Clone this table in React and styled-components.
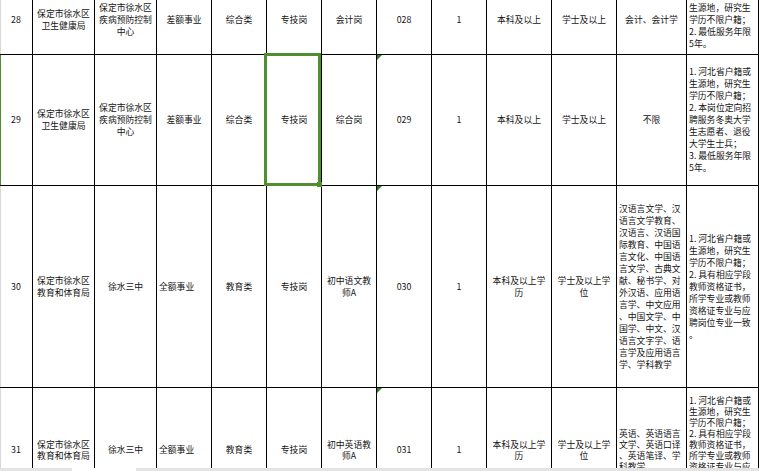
import styled, { createGlobalStyle } from "styled-components";

const GlobalStyle = createGlobalStyle`
  html, body {
    margin: 0;
    padding: 0;
    background: #fff;
    overflow: hidden;
  }
  body {
    font-family: "Noto Sans CJK SC", "Liberation Sans", sans-serif;
  }
`;

const COLS = [33, 62, 62, 55, 55, 55, 55, 55, 55, 65, 65, 70, 72];
const GREEN = "#4f8f2f";

const Window = styled.div`
  width: 759px;
  height: 471px;
  display: flex;
  flex-direction: column;
  overflow: hidden;
`;

const SheetArea = styled.div`
  height: 468px;
  overflow: hidden;
  box-shadow: inset 1px 0 #d8d8d8;
`;

const Sheet = styled.div`
  display: flex;
  flex-direction: column;
  margin-top: -14px;
`;

const Row = styled.div`
  display: grid;
  grid-template-columns: ${COLS.map((w) => `${w}px`).join(" ")};
  height: ${(p) => p.$height}px;
  flex-shrink: 0;
`;

const Cell = styled.div`
  position: relative;
  box-sizing: border-box;
  display: flex;
  align-items: center;
  justify-content: ${(p) => (p.$align === "l" ? "flex-start" : "center")};
  text-align: ${(p) => (p.$align === "l" ? "left" : "center")};
  padding: 0 2px;
  border-right: 1px solid #000;
  border-bottom: 1px solid #000;
  white-space: pre;
  font-size: 8.8px;
  line-height: ${(p) => p.$lh}px;
  color: #141414;
  box-shadow: ${(p) => (p.$edge ? `inset 1px 0 ${GREEN}` : "none")};
`;

const Selection = styled.div`
  position: absolute;
  top: -2px;
  left: -3px;
  right: 0;
  bottom: -1px;
  border: 3px solid ${GREEN};
  z-index: 2;
  pointer-events: none;
`;

const FillHandle = styled.div`
  position: absolute;
  right: -1px;
  bottom: -2px;
  width: 5px;
  height: 5px;
  background: ${GREEN};
  z-index: 3;
`;

const ErrorMark = styled.div`
  position: absolute;
  top: 0;
  left: 0;
  width: 0;
  height: 0;
  border-top: 5px solid #2a7a2a;
  border-right: 5px solid transparent;
`;

const BottomBar = styled.div`
  height: 3px;
  display: flex;
`;

const BarPiece = styled.div`
  width: ${(p) => (p.$w ? `${p.$w}px` : "auto")};
  flex: ${(p) => (p.$w ? "none" : 1)};
  background: ${(p) => (p.$blank ? "#fff" : "#e4e4e4")};
`;

const dept1 = "保定市徐水区\n卫生健康局";
const unit1 = "保定市徐水区\n疾病预防控制\n中心";
const dept2 = "保定市徐水区\n教育和体育局";

const rows = [
  {
    height: 69,
    lh: 12.3,
    cells: [
      "28", dept1, unit1, "差额事业", "综合类", "专技岗", "会计岗", "028", "1",
      "本科及以上", "学士及以上", "会计、会计学",
      { t: "1. 河北省户籍或\n生源地，研究生\n学历不限户籍；\n2. 最低服务年限\n5年。", a: "l" },
    ],
  },
  {
    height: 131,
    lh: 12,
    active: true,
    cells: [
      "29", dept1, unit1, "差额事业", "综合类", { t: "专技岗", sel: true }, "综合岗", "029", "1",
      "本科及以上", "学士及以上", "不限",
      {
        t: "1. 河北省户籍或\n生源地，研究生\n学历不限户籍；\n2. 本岗位定向招\n聘服务冬奥大学\n生志愿者、退役\n大学生士兵；\n3. 最低服务年限\n5年。",
        a: "l",
      },
    ],
  },
  {
    height: 202,
    lh: 12,
    cells: [
      "30", dept2, "徐水三中", { t: "全额事业", a: "l" }, "教育类", "专技岗", "初中语文教\n师A", "030", "1",
      "本科及以上学\n历", "学士及以上学\n位",
      {
        t: "汉语言文学、汉\n语言文学教育、\n汉语言、汉语国\n际教育、中国语\n言文化、中国语\n言文学、古典文\n献、秘书学、对\n外汉语、应用语\n言学、中文应用\n、中国文学、中\n国学、中文、汉\n语言文字学、语\n言学及应用语言\n学、学科教学",
        a: "l",
      },
      {
        t: "1. 河北省户籍或\n生源地，研究生\n学历不限户籍；\n2. 具有相应学段\n教师资格证书，\n所学专业或教师\n资格证专业与应\n聘岗位专业一致\n。",
        a: "l",
      },
    ],
  },
  {
    height: 124,
    lh: 11,
    cells: [
      "31", dept2, "徐水三中", { t: "全额事业", a: "l" }, "教育类", "专技岗", "初中英语教\n师A", "031", "1",
      "本科及以上学\n历", "学士及以上学\n位",
      { t: "英语、英语语言\n文学、英语口译\n、英语笔译、学\n科教学", a: "l" },
      {
        t: "1. 河北省户籍或\n生源地，研究生\n学历不限户籍；\n2. 具有相应学段\n教师资格证书，\n所学专业或教师\n资格证专业与应\n聘岗位专业一致\n；3. 最低服务年\n限5年。\n",
        a: "l",
      },
    ],
  },
];

export default function App() {
  return (
    <Window>
      <GlobalStyle />
      <SheetArea>
        <Sheet>
          {rows.map((row, ri) => (
            <Row key={ri} $height={row.height}>
              {row.cells.map((c, ci) => {
                const cell = typeof c === "string" ? { t: c } : c;
                return (
                  <Cell
                    key={ci}
                    $align={cell.a || "c"}
                    $lh={row.lh}
                    $edge={ci === 0 && row.active}
                  >
                    {ci === 7 && <ErrorMark />}
                    {cell.t}
                    {cell.sel && (
                      <>
                        <Selection />
                        <FillHandle />
                      </>
                    )}
                  </Cell>
                );
              })}
            </Row>
          ))}
        </Sheet>
      </SheetArea>
      <BottomBar>
        <BarPiece $w={72} />
        <BarPiece $w={64} $blank />
        <BarPiece />
      </BottomBar>
    </Window>
  );
}
